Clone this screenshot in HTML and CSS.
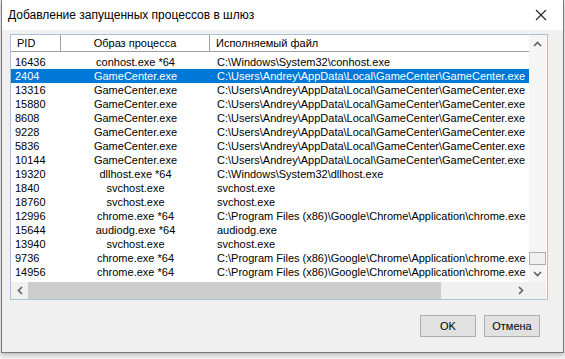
FILE: index.html
```html
<!DOCTYPE html>
<html lang="ru">
<head>
  <meta charset="UTF-8" />
  <title>Добавление запущенных процессов в шлюз</title>
  <link rel="stylesheet" href="styles.css">
</head>
<body>

  <div class="window">
    <div class="titlebar">
      <span class="title">Добавление запущенных процессов в шлюз</span>
      <svg class="close" width="12" height="12" viewBox="0 0 12 12">
        <path d="M1 1 L11 11 M11 1 L1 11" stroke="#222" stroke-width="1.1" fill="none" />
      </svg>
    </div>

    <div class="dialog">
      <!-- Process list -->
      <div class="listbox">
        <div class="list-main">
          <div class="list-head">
            <div class="hcell">PID</div>
            <div class="hcell center">Образ процесса</div>
            <div class="hcell last">Исполняемый файл</div>
          </div>
          <div class="rows" id="rows"></div>
        </div>

        <div class="vscroll">
          <div class="sb-btn">
            <svg width="9" height="6" viewBox="0 0 9 6"><path d="M1 5 L4.5 1.5 L8 5" stroke="#606060" stroke-width="1.6" fill="none" /></svg>
          </div>
          <div class="vtrack">
            <div class="vthumb"></div>
          </div>
          <div class="sb-btn">
            <svg width="9" height="6" viewBox="0 0 9 6"><path d="M1 1 L4.5 4.5 L8 1" stroke="#606060" stroke-width="1.6" fill="none" /></svg>
          </div>
        </div>

        <div class="hscroll">
          <div class="sb-btn">
            <svg width="6" height="9" viewBox="0 0 6 9"><path d="M5 1 L1.5 4.5 L5 8" stroke="#606060" stroke-width="1.6" fill="none" /></svg>
          </div>
          <div class="htrack">
            <div class="hthumb"></div>
          </div>
          <div class="sb-btn">
            <svg width="6" height="9" viewBox="0 0 6 9"><path d="M1 1 L4.5 4.5 L1 8" stroke="#606060" stroke-width="1.6" fill="none" /></svg>
          </div>
        </div>

        <div class="corner"></div>
      </div>

      <div class="buttons">
        <button class="btn">OK</button>
        <button class="btn">Отмена</button>
      </div>
    </div>
  </div>

  <script>
    const gc = 'C:\\Users\\Andrey\\AppData\\Local\\GameCenter\\GameCenter.exe';
    const chrome = 'C:\\Program Files (x86)\\Google\\Chrome\\Application\\chrome.exe';
    const processes = [
      ['16436', 'conhost.exe *64', 'C:\\Windows\\System32\\conhost.exe'],
      ['2404', 'GameCenter.exe', gc],
      ['13316', 'GameCenter.exe', gc],
      ['15880', 'GameCenter.exe', gc],
      ['8608', 'GameCenter.exe', gc],
      ['9228', 'GameCenter.exe', gc],
      ['5836', 'GameCenter.exe', gc],
      ['10144', 'GameCenter.exe', gc],
      ['19320', 'dllhost.exe *64', 'C:\\Windows\\System32\\dllhost.exe'],
      ['1840', 'svchost.exe', 'svchost.exe'],
      ['18760', 'svchost.exe', 'svchost.exe'],
      ['12996', 'chrome.exe *64', chrome],
      ['15644', 'audiodg.exe *64', 'audiodg.exe'],
      ['13940', 'svchost.exe', 'svchost.exe'],
      ['9736', 'chrome.exe *64', chrome],
      ['14956', 'chrome.exe *64', chrome]
    ];

    const rows = document.getElementById('rows');
    processes.forEach((p, i) => {
      const row = document.createElement('div');
      row.className = 'row' + (i === 1 ? ' selected' : '');
      row.innerHTML = `
        <div class="cell">${p[0]}</div>
        <div class="cell center">${p[1]}</div>
        <div class="cell">${p[2]}</div>
      `;
      rows.appendChild(row);
    });
  </script>

</body>
</html>
```

FILE: styles.css
```css
body {
  margin: 0;
  padding: 0;
  background: #f4f4f4;
  font-family: "Liberation Sans", Arial, sans-serif;
  width: 565px;
  height: 359px;
  overflow: hidden;
}
.window {
  margin-left: 1px;
  width: 561px;
  height: 352px;
  border: 1px solid #7a7a7a;
  border-top: none;
  background: #f0f0f0;
  box-shadow: 0 2px 5px rgba(0,0,0,0.25);
  display: flex;
  flex-direction: column;
}
.titlebar {
  height: 30px;
  background: #fff;
  display: flex;
  align-items: center;
  justify-content: space-between;
  padding: 0 16px 0 6px;
}
.title {
  font-size: 12px;
  color: #000;
  margin-top: -1px;
}
.close {
  display: block;
}
.dialog {
  flex: 1;
  display: flex;
  flex-direction: column;
  padding: 4px 0 0 8px;
}
.listbox {
  width: 536px;
  height: 264px;
  border: 1px solid #a9c2d9;
  background: #fff;
  display: grid;
  grid-template-columns: 518px 17px;
  grid-template-rows: 247px 17px;
}
.list-main {
  overflow: hidden;
  font-size: 11px;
}
.list-head {
  display: grid;
  grid-template-columns: 50px 149px 1fr;
  height: 16px;
  border-bottom: 1px solid #a0a0a0;
}
.hcell {
  border-right: 1px solid #a0a0a0;
  padding-left: 6px;
  line-height: 16px;
  white-space: nowrap;
}
.hcell.last {
  border-right: none;
}
.center {
  text-align: center;
  padding-left: 0;
}
.rows {
  padding-top: 3px;
}
.row {
  display: grid;
  grid-template-columns: 50px 149px 1fr;
  height: 14px;
  line-height: 14px;
  white-space: nowrap;
}
.row .cell {
  padding-left: 4px;
  overflow: hidden;
}
.row .cell:last-child {
  padding-left: 7px;
}
.row .cell.center {
  padding-left: 0;
}
.row.selected {
  background: #0078d7;
  color: #fff;
}
.vscroll {
  background: #f5f5f5;
  display: flex;
  flex-direction: column;
}
.sb-btn {
  width: 17px;
  height: 17px;
  display: flex;
  align-items: center;
  justify-content: center;
  flex: none;
}
.vtrack {
  flex: 1;
  display: flex;
  flex-direction: column;
  justify-content: flex-end;
}
.vthumb {
  height: 11px;
  border: 1px solid #adadad;
  background: #f0f0f0;
}
.hscroll {
  background: #f0f0f0;
  display: flex;
}
.htrack {
  flex: 1;
}
.hthumb {
  width: 413px;
  height: 17px;
  background: #cdcdcd;
}
.corner {
  background: #f0f0f0;
}
.buttons {
  display: flex;
  justify-content: flex-end;
  gap: 8px;
  padding: 15px 23px 0 0;
}
.btn {
  font-family: "Liberation Sans", Arial, sans-serif;
  font-size: 11px;
  width: 56px;
  height: 22px;
  background: #e1e1e1;
  border: 1px solid #adadad;
  color: #000;
  padding: 0;
}
```
